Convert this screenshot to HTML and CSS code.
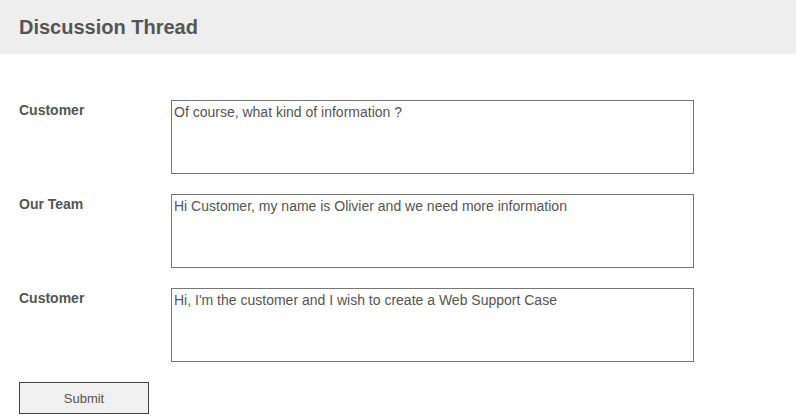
FILE: index.html
```html
<!DOCTYPE html>
<html lang="en">
<head>
<meta charset="utf-8">
<title>Discussion Thread</title>
<link rel="stylesheet" href="styles.css">
</head>
<body>
<header class="header">
  <h1 class="title">Discussion Thread</h1>
</header>
<main class="thread">
  <div class="row">
    <label class="author">Customer</label>
    <textarea class="message" readonly>Of course, what kind of information ?</textarea>
  </div>
  <div class="row">
    <label class="author">Our Team</label>
    <textarea class="message" readonly>Hi Customer, my name is Olivier and we need more information</textarea>
  </div>
  <div class="row">
    <label class="author">Customer</label>
    <textarea class="message" readonly>Hi, I'm the customer and I wish to create a Web Support Case</textarea>
  </div>
  <button class="submit" type="button">Submit</button>
</main>
</body>
</html>
```

FILE: styles.css
```css
html, body {
  margin: 0;
  padding: 0;
  background: #fff;
}
body {
  font-family: "Liberation Sans", Arial, sans-serif;
  color: #555;
}
.header {
  box-sizing: border-box;
  height: 54px;
  background: #eeeeee;
  padding: 16px 19px 0;
}
.title {
  margin: 0;
  font-size: 20px;
  font-weight: bold;
  line-height: 23px;
  color: #555;
}
.thread {
  display: flex;
  flex-direction: column;
  align-items: flex-start;
  gap: 20px;
  padding: 46px 19px 0;
}
.row {
  display: flex;
  align-items: flex-start;
}
.author {
  width: 152px;
  padding-top: 2px;
  font-size: 14px;
  font-weight: bold;
  line-height: 16px;
  color: #555;
}
.message {
  box-sizing: border-box;
  display: block;
  width: 523px;
  height: 74px;
  margin: 0;
  padding: 3px 2px 2px;
  border: 1px solid #767676;
  border-radius: 0;
  resize: none;
  outline: none;
  font-family: "Liberation Sans", Arial, sans-serif;
  font-size: 14px;
  line-height: 16px;
  color: #555;
  background: #fff;
}
.submit {
  box-sizing: border-box;
  width: 130px;
  height: 32px;
  margin: 0;
  padding: 0;
  border: 1px solid #444;
  border-radius: 0;
  background: #f0f0f0;
  font-family: "Liberation Sans", Arial, sans-serif;
  font-size: 13px;
  color: #555;
}
```
